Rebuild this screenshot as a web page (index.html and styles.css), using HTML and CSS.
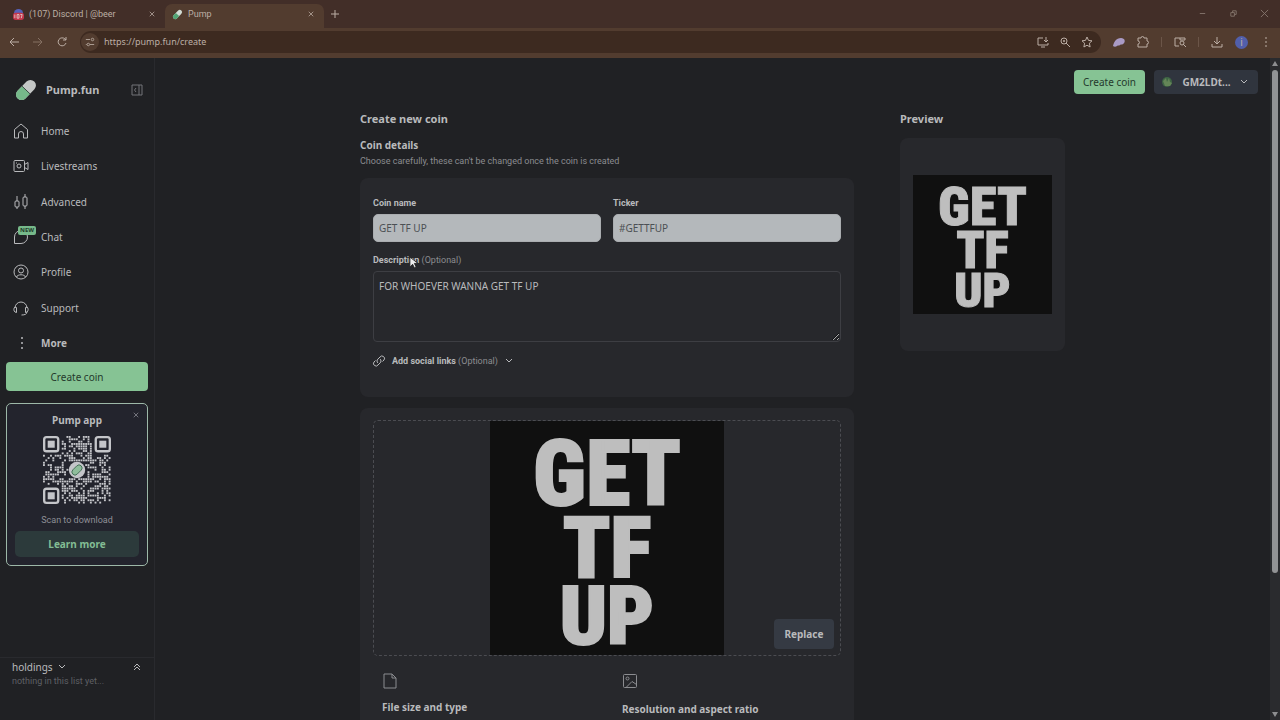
FILE: index.html
```html
<!DOCTYPE html>
<html lang="en">
<head>
    <meta charset="UTF-8">
    <title>Pump</title>
    <link rel="stylesheet" href="styles.css">
</head>
<body>
<header class="browser">
    <div class="tabs">
        <div class="tab">
            <svg class="fav" viewBox="0 0 12 12"><circle cx="6" cy="5" r="5" fill="#5661b8"/><rect y="4" width="12" height="8" rx="3" fill="#c2364a"/><path d="M2 6v4M4.500 6h2v4h-2zM8 6h2l-1 4" fill="none" stroke="#ddc5c5"/></svg>
            <span class="tab-name">(107) Discord | @beer</span>
            <button class="plain" aria-label="Close tab"><svg class="x" viewBox="0 0 8 8"><path d="M1 1l6 6M7 1L1 7"/></svg></button>
        </div>
        <div class="tab active">
            <svg class="fav" viewBox="0 0 24 24"><g transform="rotate(45 12 12)"><rect x="7" y="0" width="10" height="24" rx="5" fill="#d2dcd5"/><path d="M7 12h10v7a5 5 0 0 1-10 0z" fill="#52a574"/></g></svg>
            <span class="tab-name">Pump</span>
            <button class="plain" aria-label="Close tab"><svg class="x" viewBox="0 0 8 8"><path d="M1 1l6 6M7 1L1 7"/></svg></button>
        </div>
        <button class="plain new-tab" aria-label="New tab"><svg class="x" viewBox="0 0 8 8"><path d="M4 0v8M0 4h8"/></svg></button>
        <div class="win">
            <svg viewBox="0 0 10 10"><path d="M2 5h6"/></svg>
            <svg viewBox="0 0 10 10"><path d="M2 4h4v4H2zM4 4V2h4v4H6"/></svg>
            <svg viewBox="0 0 10 10"><path d="M1 1l8 8M9 1L1 9"/></svg>
        </div>
    </div>
    <div class="toolbar">
        <button class="plain" aria-label="Back"><svg class="tool" viewBox="0 0 12 12"><path d="M11 6H2M6 2L2 6l4 4"/></svg></button>
        <button class="plain dim" aria-label="Forward"><svg class="tool" viewBox="0 0 12 12"><path d="M1 6h9M6 2l4 4-4 4"/></svg></button>
        <button class="plain" aria-label="Reload"><svg class="tool" viewBox="0 0 12 12"><path d="M10 7a4 4 0 1 1-1-4l1 1M10 1v3H7"/></svg></button>
        <div class="address">
            <span class="site"><svg class="tool" viewBox="0 0 12 12"><path d="M1 3h5M6 9h5M1 9h1"/><circle cx="9" cy="3" r="1.500"/><circle cx="4" cy="9" r="1.500"/></svg></span>
            <input class="url" type="text" aria-label="Address" value="https://pump.fun/create">
            <svg class="tool" viewBox="0 0 12 12"><path d="M6 2H1v7h10V7M4 11h4M9 1v5M7 4l2 2 2-2"/></svg>
            <svg class="tool" viewBox="0 0 12 12"><circle cx="5" cy="5" r="3"/><path d="M7 7l4 4M5 4v2M4 5h2"/></svg>
            <svg class="tool" viewBox="0 0 12 12"><path d="M6 1l1.500 3.400 3.500.4-2.600 2.400.7 3.800L6 9.200 2.900 11l.7-3.800L1 4.800l3.500-.4z"/></svg>
        </div>
        <div class="extensions">
            <svg class="tool" viewBox="0 0 12 12"><path d="M0 10c1-4 3-8 8-8 4 0 5 4 2 6-1 1-2 0-3 1s-2 0-3 1-3 1-4 0z" fill="#a99ac5" stroke="none"/></svg>
            <svg class="tool" viewBox="0 0 12 12"><path d="M1 2h3a1.500 1.500 0 0 1 3 0h3v3a1.500 1.500 0 0 1 0 3v3H1V8a1.500 1.500 0 0 0 0-3z"/></svg>
            <i class="bar"></i>
            <svg class="tool" viewBox="0 0 12 12"><path d="M5 10H1V2h10v2M6 2v2h5"/><circle cx="8" cy="7" r="2"/><path d="M9 8l3 3"/></svg>
            <i class="bar"></i>
            <svg class="tool" viewBox="0 0 12 12"><path d="M6 1v7M3 5l3 3 3-3M1 8v3h10V8"/></svg>
            <span class="user">i</span>
            <svg class="tool" viewBox="0 0 12 12"><path d="M6 1v2M6 5v2M6 9v2"/></svg>
        </div>
    </div>
</header>
<div class="page">
    <aside class="sidebar">
        <div class="brand">
            <svg class="logo" viewBox="0 0 24 24"><g transform="rotate(44 12 12)"><rect x="6" y="-1" width="12" height="26" rx="6" fill="#c5c8c7"/><path d="M6 12h12v7a6 6 0 0 1-12 0z" fill="#76b98a"/><path d="M6 12h12" stroke="#35483e" stroke-width="1"/></g></svg>
            <b>Pump.fun</b>
            <button class="plain" aria-label="Collapse"><svg class="fold" viewBox="0 0 12 12"><path d="M1 1h10v10H1zM8 1v10M5 4L3.500 6 5 8"/></svg></button>
        </div>
        <nav>
            <a href="#"><svg class="icon" viewBox="0 0 16 16"><path d="M1.500 6.500L8 1l6.500 5.500V15h-4v-4a2.500 2.500 0 0 0-5 0v4h-4z"/></svg>Home</a>
            <a href="#"><svg class="icon" viewBox="0 0 16 16"><rect x="1" y="2.500" width="10.500" height="11" rx="1"/><circle cx="6" cy="8" r="2"/><path d="M11.500 6.500l3.500-2v7l-3.500-2M3 5h1"/></svg>Livestreams</a>
            <a href="#"><svg class="icon" viewBox="0 0 16 16"><rect x="2" y="7" width="4" height="6" rx="1"/><rect x="10" y="3" width="4" height="9" rx="1"/><path d="M4 2v5M4 13v2M12 0v3M12 12v3"/></svg>Advanced</a>
            <a href="#" class="chat"><svg class="icon" viewBox="0 0 16 16"><path d="M1.500 14.500V8A6.500 6.500 0 1 1 8 14.500z"/></svg><span class="new">NEW</span>Chat</a>
            <a href="#"><svg class="icon" viewBox="0 0 16 16"><circle cx="8" cy="8" r="7"/><circle cx="8" cy="6.500" r="2.500"/><path d="M3.500 13c1-3 8-3 9 0"/></svg>Profile</a>
            <a href="#"><svg class="icon" viewBox="0 0 16 16"><path d="M2 8a6 6 0 0 1 12 0M2 7c-1.500 1-1.500 4 0 5l1.500.5v-5zM14 7c1.500 1 1.500 4 0 5l-1.500.5v-5zM14 12c0 2-2 3-5.500 3"/></svg>Support</a>
            <a href="#" class="more"><svg class="icon" viewBox="0 0 16 16"><g fill="currentColor" stroke="none"><circle cx="9" cy="3" r="1"/><circle cx="9" cy="8" r="1"/><circle cx="9" cy="13" r="1"/></g></svg>More</a>
        </nav>
        <button class="green wide">Create coin</button>
        <section class="app">
            <button class="plain app-close" aria-label="Dismiss"><svg class="x" viewBox="0 0 8 8"><path d="M1 1l6 6M7 1L1 7"/></svg></button>
            <h2>Pump app</h2>
            <svg class="qr" id="qr" viewBox="0 0 29 29"></svg>
            <p>Scan to download</p>
            <button class="learn">Learn more</button>
        </section>
        <section class="holdings">
            <div class="holdings-head">
                <span>holdings</span>
                <svg class="chev" viewBox="0 0 8 8"><path d="M1 2l3 3 3-3"/></svg>
                <svg class="chev last" viewBox="0 0 8 8"><path d="M1 4l3-3 3 3M1 7l3-3 3 3"/></svg>
            </div>
            <p>nothing in this list yet...</p>
        </section>
    </aside>
    <main>
        <div class="actions">
            <button class="green">Create coin</button>
            <button class="wallet">
                <svg class="avatar" viewBox="0 0 12 12"><circle cx="6" cy="6" r="5" fill="#3e6544"/><path d="M2 5l3-3 1 4 2-4 1 4 2 1-2 3H4z" fill="#648557"/></svg>
                <b>GM2LDt...</b>
                <svg class="chev" viewBox="0 0 8 8"><path d="M1 2l3 3 3-3"/></svg>
            </button>
        </div>
        <div class="content">
            <form class="create">
                <h1>Create new coin</h1>
                <h2>Coin details</h2>
                <p class="hint">Choose carefully, these can't be changed once the coin is created</p>
                <div class="card details">
                    <div class="pair">
                        <div class="field">
                            <label for="name">Coin name</label>
                            <input id="name" type="text" value="GET TF UP">
                        </div>
                        <div class="field">
                            <label for="ticker">Ticker</label>
                            <input id="ticker" type="text" value="#GETTFUP">
                        </div>
                    </div>
                    <div class="field about">
                        <label for="about">Description <span>(Optional)</span></label>
                        <textarea id="about">FOR WHOEVER WANNA GET TF UP</textarea>
                        <svg class="cursor" viewBox="0 0 10 14"><path d="M1 1v11l3-3 2 4 2-1-2-4h4z" fill="#eee" stroke="#222"/></svg>
                    </div>
                    <button type="button" class="plain social">
                        <svg class="link" viewBox="0 0 12 12"><path d="M5 8a2.500 2.500 0 0 1 0-4l2-2a2.500 2.500 0 0 1 4 3L9.500 6.500M7 4a2.500 2.500 0 0 1 0 4l-2 2a2.500 2.500 0 0 1-4-3l1.500-1.500"/></svg>
                        <span>Add social links <i>(Optional)</i></span>
                        <svg class="chev" viewBox="0 0 8 8"><path d="M1 2l3 3 3-3"/></svg>
                    </button>
                </div>
                <div class="card media">
                    <div class="drop">
                        <div class="poster"><span class="get">GET</span><span class="tf">TF</span><span class="up">UP</span></div>
                        <button type="button" class="replace">Replace</button>
                    </div>
                    <div class="rules">
                        <div>
                            <svg class="icon" viewBox="0 0 16 16"><path d="M2 1h8l4 4v10H2zM10 1v4h4"/></svg>
                            <h3>File size and type</h3>
                        </div>
                        <div class="ratio">
                            <svg class="icon" viewBox="0 0 16 16"><rect x="1.500" y="1.500" width="13" height="13" rx="1"/><circle cx="5.500" cy="5.500" r="1.500"/><path d="M4 14.500l6-6 4.500 3"/></svg>
                            <h3>Resolution and aspect ratio</h3>
                        </div>
                    </div>
                </div>
            </form>
            <section class="preview">
                <h1>Preview</h1>
                <div class="card">
                    <div class="poster small"><span class="get">GET</span><span class="tf">TF</span><span class="up">UP</span></div>
                </div>
            </section>
        </div>
    </main>
    <div class="scroll"><svg viewBox="0 0 10 10"><path d="M5 2l3 5H2z"/></svg><div class="thumb"></div><svg viewBox="0 0 10 10"><path d="M5 8l3-5H2z"/></svg></div>
</div>
<script src="qr.js"></script>
</body>
</html>
```
FILE: styles.css
```css
*{
    margin: 0;
    padding: 0;
    box-sizing: border-box;
}
body{
    height: 100vh;
    display: flex;
    flex-direction: column;
    overflow: hidden;
    background: #202124;
    color: #b9babc;
    font: 10px/16px "Noto Sans", "Open Sans", sans-serif;
}
button,input,textarea{
    font: inherit;
    color: inherit;
    border: 0;
}
svg{
    display: block;
    flex: none;
    fill: none;
    stroke: currentColor;
    overflow: visible;
}
h1{
    font-size: 11px;
    line-height: 18px;
}
h2,h3{
    font-size: 10px;
    line-height: 16px;
}
.plain{
    background: none;
    display: flex;
    align-items: center;
}
/* small print */
.tab,.hint,label,.social,.app p,.holdings p{
    font-family: Roboto, "Noto Sans", sans-serif;
    font-size: 9px;
}

/* browser bar */
.browser{
    height: 58px;
    flex: none;
    background: #422e28;
    color: #bcaea5;
}
.tabs{
    height: 28px;
    display: flex;
    padding: 4px 11px 0 6px;
}
.tab{
    width: 159px;
    display: flex;
    align-items: center;
    gap: 5px;
    padding: 0 10px 4px 7px;
}
.tab.active{
    background: #523c2f;
    border-radius: 7px 7px 0 0;
}
.tab-name{
    flex: 1;
}
.fav{
    width: 11px;
    height: 11px;
    stroke: none;
}
.x{
    width: 6px;
    height: 6px;
}
.new-tab{
    padding: 0 7px 4px;
}
.new-tab svg{
    width: 8px;
    height: 8px;
}
.win{
    margin-left: auto;
    display: flex;
    gap: 22px;
    padding-top: 5px;
    color: #86766d;
}
.win svg{
    width: 9px;
    height: 9px;
}
.toolbar{
    height: 30px;
    display: flex;
    align-items: center;
    gap: 12px;
    padding: 0 8px 2px;
    background: #523c2f;
}
.tool{
    width: 12px;
    height: 12px;
}
.dim{
    color: #857063;
}
.address{
    flex: 1;
    height: 22px;
    display: flex;
    align-items: center;
    gap: 10px;
    padding: 0 8px 0 1px;
    border-radius: 11px;
    background: #3d2a20;
}
.site{
    padding: 4px;
    border-radius: 50%;
    background: #523c2f;
}
.site svg{
    width: 10px;
    height: 10px;
}
.url{
    flex: 1;
    margin-left: -5px;
    background: none;
    font-size: 9px;
}
.extensions{
    display: flex;
    align-items: center;
    gap: 12px;
}
.bar{
    width: 1px;
    height: 10px;
    background: #6b5548;
}
.user{
    width: 13px;
    height: 13px;
    line-height: 13px;
    border-radius: 50%;
    text-align: center;
    background: #515fab;
}

/* sidebar */
.page{
    flex: 1;
    min-height: 0;
    display: flex;
}
.sidebar{
    width: 155px;
    flex: none;
    display: flex;
    flex-direction: column;
    border-right: 1px solid #292a2e;
}
.brand{
    height: 55px;
    display: flex;
    align-items: center;
    padding: 9px 11px 0 15px;
}
.brand b{
    flex: 1;
    margin-left: 9px;
    font-size: 11px;
}
.logo{
    width: 22px;
    height: 22px;
    stroke: none;
}
.fold{
    width: 12px;
    height: 12px;
    color: #737478;
}
nav{
    height: 248px;
    display: grid;
    grid-auto-rows: 1fr;
    margin-bottom: 1px;
}
nav a{
    display: flex;
    align-items: center;
    gap: 12px;
    padding-left: 13px;
    color: inherit;
    text-decoration: none;
}
.icon{
    width: 16px;
    height: 16px;
}
.chat{
    position: relative;
}
.new{
    position: absolute;
    left: 18px;
    top: 7px;
    padding: 0 2px;
    border-radius: 2px;
    background: #76b98a;
    color: #1f3b2a;
    font-size: 6px;
    font-weight: bold;
    line-height: 9px;
}
.more{
    font-weight: bold;
}
.green{
    border-radius: 4px;
    background: #86c394;
    color: #24392c;
}
.wide{
    height: 29px;
    margin: 0 6px 12px;
}
.app{
    position: relative;
    margin: 0 6px;
    padding: 8px;
    border: 1px solid #9db8a8;
    border-radius: 5px;
    background: #23242d;
    text-align: center;
}
.app-close{
    position: absolute;
    right: 8px;
    top: 8px;
    color: #8d8e96;
}
.qr{
    width: 68px;
    height: 68px;
    margin: 8px auto;
    fill: #c4c5c9;
    stroke: none;
}
.app p{
    color: #8e8f96;
    margin-bottom: 3px;
}
.learn{
    width: 100%;
    height: 26px;
    border-radius: 5px;
    background: #2c3a3b;
    color: #83bd94;
    font-weight: bold;
}
.holdings{
    height: 63px;
    margin-top: auto;
    padding: 1px 13px 0 12px;
    border-top: 1px solid #292a2e;
}
.holdings-head{
    display: flex;
    align-items: center;
    gap: 5px;
}
.holdings p{
    color: #5f6064;
    line-height: 12px;
}
.chev{
    width: 8px;
    height: 8px;
}
.last{
    margin-left: auto;
}

/* main area */
main{
    flex: 1;
    min-width: 0;
    overflow: hidden;
}
.actions{
    display: flex;
    justify-content: flex-end;
    gap: 9px;
    padding: 12px 12px 0;
}
.actions button{
    height: 24px;
}
.actions .green{
    padding: 0 9px;
}
.wallet{
    width: 104px;
    display: flex;
    align-items: center;
    justify-content: space-between;
    padding: 0 10px 0 7px;
    border-radius: 4px;
    background: #30353e;
}
.avatar{
    width: 12px;
    height: 12px;
    stroke: none;
}
.content{
    display: flex;
    gap: 46px;
    max-width: 705px;
    margin: 16px auto 0;
}
.create{
    flex: 1;
}
.create h2{
    margin-top: 9px;
}
.hint{
    color: #8b8c90;
    line-height: 16px;
}
.card{
    border-radius: 8px;
    background: #27282c;
}
.details{
    height: 219px;
    margin: 9px 0 11px;
    padding: 18px 13px;
}
.pair{
    display: grid;
    grid-template-columns: 1fr 1fr;
    gap: 12px;
}
.field{
    display: flex;
    flex-direction: column;
}
label{
    margin-bottom: 4px;
    font-weight: bold;
    line-height: 14px;
}
label span,.social i{
    color: #8b8c90;
    font-style: normal;
    font-weight: normal;
}
.field input{
    width: 100%;
    height: 28px;
    padding: 0 5px;
    border: 1px solid #aaadb0;
    border-radius: 5px;
    background: #b4b8bb;
    color: #4c5054;
}
.about{
    position: relative;
    margin-top: 11px;
}
textarea{
    height: 71px;
    padding: 6px 5px;
    border: 1px solid #3d3e43;
    border-radius: 4px;
    background: none;
    resize: vertical;
}
.cursor{
    position: absolute;
    left: 36px;
    top: 3px;
    width: 9px;
    height: 13px;
}
.social{
    gap: 7px;
    margin-top: 11px;
    font-weight: bold;
}
.link{
    width: 12px;
    height: 12px;
}
.media{
    padding: 12px 13px;
}
.drop{
    position: relative;
    height: 236px;
    border: 1px dashed #4b4c51;
    border-radius: 5px;
}
.poster{
    width: 234px;
    height: 234px;
    display: flex;
    flex-direction: column;
    align-items: center;
    margin: 0 auto;
    padding-top: 17px;
    background: #101010;
    color: #bebebe;
    font-family: "Noto Sans ExtraCondensed", "Roboto Condensed", "Liberation Sans Narrow", sans-serif;
    font-weight: 900;
    -webkit-text-stroke: 2px #bebebe;
}
.get{
    font-size: 90px;
    line-height: 74px;
}
.tf{
    font-size: 86px;
    line-height: 72px;
}
.up{
    font-size: 82px;
    line-height: 64px;
}
.replace{
    position: absolute;
    right: 6px;
    bottom: 6px;
    width: 60px;
    height: 30px;
    border-radius: 4px;
    background: #353a43;
    font-weight: bold;
}
.rules{
    display: grid;
    grid-template-columns: 1fr 1fr;
    padding: 17px 9px;
}
.rules svg{
    color: #8b8c90;
    margin-bottom: 10px;
}
.rules .ratio{
    padding-left: 15px;
}
.ratio h3{
    padding-top: 2px;
}
.preview{
    width: 165px;
}
.preview .card{
    margin-top: 10px;
    padding: 37px 13px;
}
.small{
    width: 139px;
    height: 139px;
    padding-top: 10px;
    -webkit-text-stroke-width: 1px;
}
.small .get{
    font-size: 54px;
    line-height: 44px;
}
.small .tf{
    font-size: 51px;
    line-height: 43px;
}
.small .up{
    font-size: 49px;
    line-height: 38px;
}
.scroll{
    width: 10px;
    display: flex;
    flex-direction: column;
    align-items: center;
    background: #2a2b2e;
}
.scroll svg{
    width: 10px;
    height: 12px;
    fill: #8d8e90;
    stroke: none;
}
.thumb{
    width: 6px;
    height: 76%;
    margin-bottom: auto;
    border-radius: 3px;
    background: #929395;
}
```
FILE: qr.js
```js
var qr = document.getElementById('qr');
var seed = 11;
var out = '';
function eye(x, y){
    out += '<rect x="' + (x+0.5) + '" y="' + (y+0.5) + '" width="6" height="6" rx="1" fill="none" stroke="#c4c5c9"/>';
    out += '<rect x="' + (x+2) + '" y="' + (y+2) + '" width="3" height="3"/>';
}
for(var y=0; y<29; y++){
    for(var x=0; x<29; x++){
        seed = (seed * 1103 + 12345) % 65521;
        // leave room for the three corners and the logo
        if((x<8 && y<8) || (x>20 && y<8) || (x<8 && y>20)) continue;
        if(Math.abs(x-14)<4 && Math.abs(y-14)<4) continue;
        if(seed % 100 < 48){
            out += '<rect x="' + x + '" y="' + y + '" width="0.8" height="0.8"/>';
        }
    }
}
eye(0, 0);
eye(22, 0);
eye(0, 22);
out += '<circle cx="14.5" cy="14.5" r="3.5"/>';
out += '<rect x="13.2" y="12" width="2.6" height="5" rx="1.3" fill="#8fbd9b" stroke="#48705a" stroke-width="0.4" transform="rotate(45 14.5 14.5)"/>';
qr.innerHTML = out;
```
